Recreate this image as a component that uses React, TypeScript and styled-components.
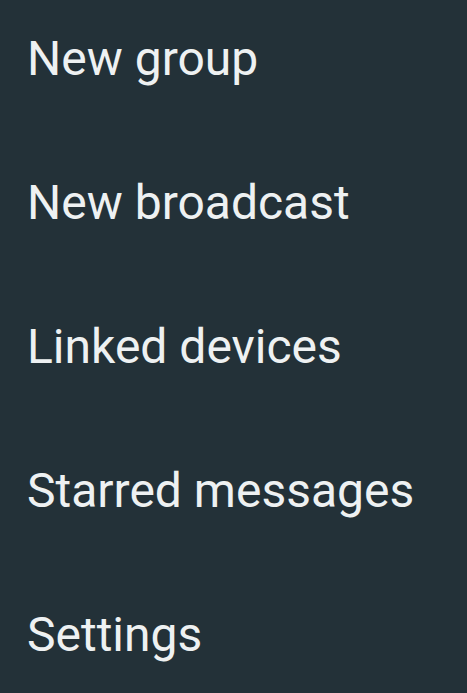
import { FC } from "react";
import styled, { createGlobalStyle } from "styled-components";

const GlobalStyle = createGlobalStyle`
  html, body {
    margin: 0;
    padding: 0;
    background-color: #233138;
  }
`;

const ITEMS = [
  "New group",
  "New broadcast",
  "Linked devices",
  "Starred messages",
  "Settings",
];

const App: FC = () => {
  return (
    <>
      <GlobalStyle />
      <Menu role="menu">
        {ITEMS.map((label) => (
          <MenuItem key={label} role="menuitem">
            {label}
          </MenuItem>
        ))}
      </Menu>
    </>
  );
};

export default App;

const Menu = styled.ul`
  list-style: none;
  margin: 0;
  padding: 0;
  width: 467px;
  height: 693px;
  overflow: hidden;
  background-color: #233138;
  display: flex;
  flex-direction: column;
`;

const MenuItem = styled.li`
  box-sizing: border-box;
  height: 144px;
  flex-shrink: 0;
  padding: 31px 26px 57px 27px;
  font-family: Roboto, "Noto Sans", sans-serif;
  font-size: 48px;
  line-height: 56px;
  color: #eef1f2;
  white-space: nowrap;
`;
